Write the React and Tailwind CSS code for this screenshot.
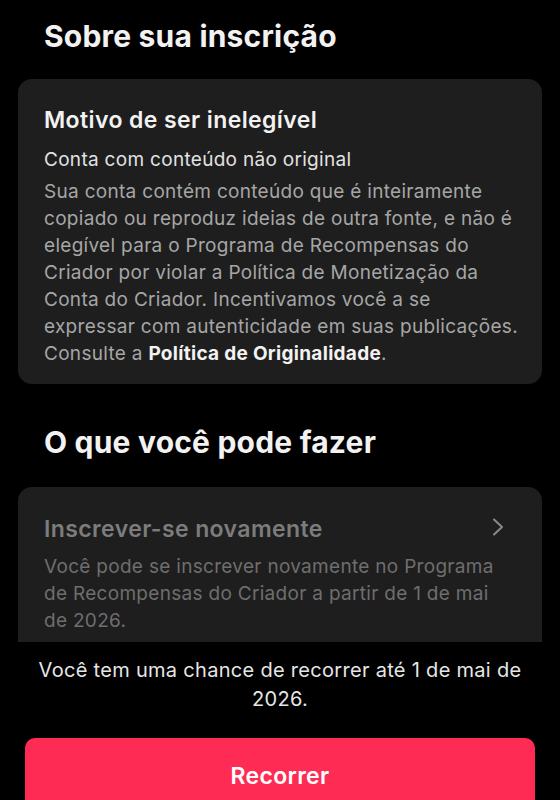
import React from 'react';

function Chevron() {
    return (
        <svg width="12" height="18" viewBox="0 0 12 18" fill="none" className="shrink-0">
            <path d="M2 1.5 L10 9 L2 16.5" stroke="#8a8a8a" strokeWidth="2" strokeLinecap="round" strokeLinejoin="round" />
        </svg>
    );
}

export default function App() {
    return (
        <div
            className="h-[800px] w-full overflow-hidden bg-black flex flex-col"
            style={{ fontFamily: 'Inter, "Noto Sans", sans-serif' }}
        >
            {/* Scrollable content */}
            <div className="h-[642px] shrink-0 overflow-hidden px-[18px]">
                <h2 className="pt-[18px] px-[26px] text-[30px] leading-[36px] font-bold tracking-[0.2px] text-[#f2f2f2]">
                    Sobre sua inscrição
                </h2>

                <div className="mt-[25px] rounded-[14px] bg-[#1e1e1e] pl-[26px] pr-[14px] pt-[26px] pb-[17px]">
                    <h3 className="text-[23px] leading-[30px] font-semibold tracking-[0.4px] text-[#f2f2f2]">
                        Motivo de ser inelegível
                    </h3>
                    <p className="mt-[11px] text-[19px] leading-[27px] tracking-[0.3px] text-[#e2e2e2]">
                        Conta com conteúdo não original
                    </p>
                    <p className="mt-[5px] text-[19px] leading-[27px] tracking-[0.3px] text-[#a6a6a6]">
                        Sua conta contém conteúdo que é inteiramente copiado ou reproduz ideias de outra fonte, e não é
                        elegível para o Programa de Recompensas do
                        <br />
                        Criador por violar a Política de Monetização da
                        <br />
                        Conta do Criador. Incentivamos você a se
                        <br />
                        expressar com autenticidade em suas publicações.
                        <br />
                        Consulte a <span className="font-bold text-[#f2f2f2]">Política de Originalidade</span>.
                    </p>
                </div>

                <h2 className="mt-[40px] px-[26px] text-[30px] leading-[36px] font-bold tracking-[0.2px] text-[#f2f2f2]">
                    O que você pode fazer
                </h2>

                <div className="mt-[27px] rounded-[14px] bg-[#1e1e1e] px-[26px] pt-[27px] pb-[30px]">
                    <div className="flex items-start justify-between">
                        <h3 className="text-[23px] leading-[30px] font-semibold tracking-[0.4px] text-[#7c7c7c]">
                            Inscrever-se novamente
                        </h3>
                        <div className="mt-[4px] pr-[12px]">
                            <Chevron />
                        </div>
                    </div>
                    <p className="mt-[9px] pr-[20px] text-[19px] leading-[27px] tracking-[0.3px] text-[#6e6e6e]">
                        Você pode se inscrever novamente no Programa de Recompensas do Criador a partir de 1 de mai de 2026.
                    </p>
                </div>
            </div>

            {/* Footer */}
            <div className="flex-1 px-[25px] pt-[14px]">
                <p className="text-center text-[20px] leading-[29px] tracking-[0.3px] text-[#e6e6e6]">
                    Você tem uma chance de recorrer até 1 de mai de 2026.
                </p>
                <button className="mt-[24px] w-full h-[76px] rounded-[10px] bg-[#fe2c55] text-[23px] font-semibold tracking-[0.3px] text-white">
                    Recorrer
                </button>
            </div>
        </div>
    );
}
